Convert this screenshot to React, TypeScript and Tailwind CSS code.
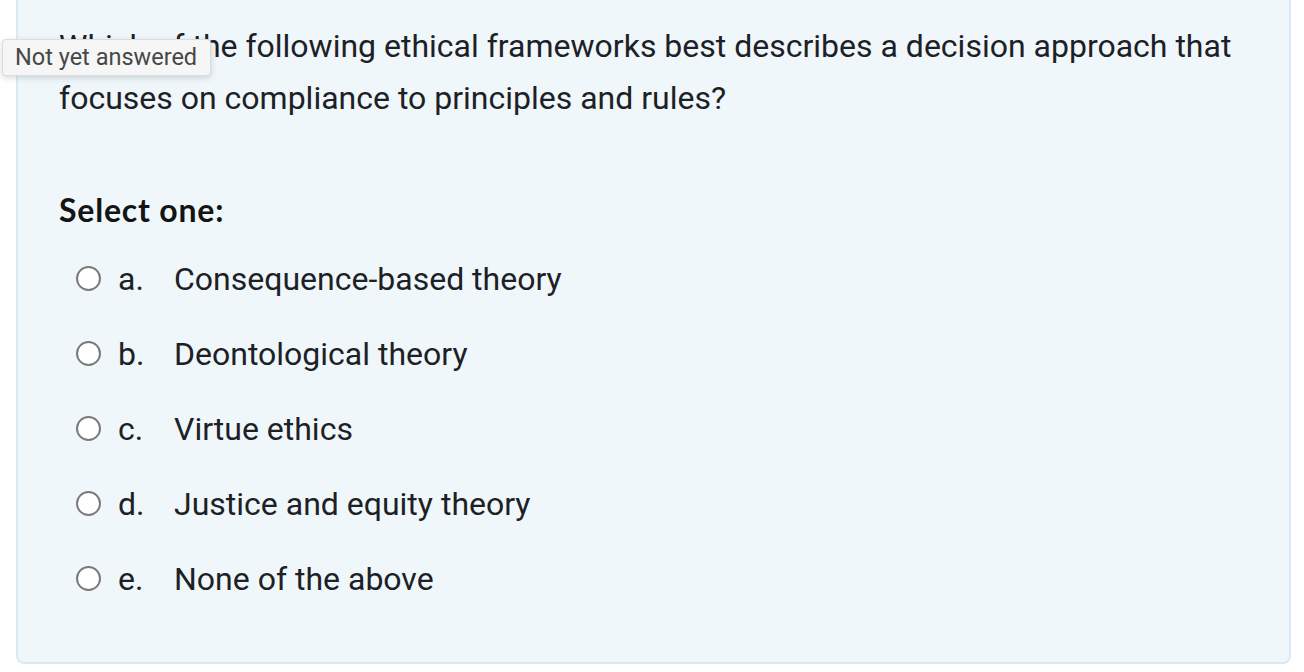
const options = [
  { letter: 'a.', text: 'Consequence-based theory' },
  { letter: 'b.', text: 'Deontological theory' },
  { letter: 'c.', text: 'Virtue ethics' },
  { letter: 'd.', text: 'Justice and equity theory' },
  { letter: 'e.', text: 'None of the above' },
];

export default function App() {
  return (
    <div className="w-[1304px] h-[672px] overflow-hidden bg-white relative font-['Roboto',sans-serif]">
      <div className="ml-4 w-[1275px] h-[684px] -mt-5 bg-[#eff7fb] border-2 border-[#d8eaf4] rounded-lg pl-[41px] pt-[38px]">
        <div className="text-[32px] leading-[52px] text-[#1d2125]">
          Which of the following ethical frameworks best describes a decision approach that
          <br />
          focuses on compliance to principles and rules?
        </div>

        <div className="mt-[69px] text-[32px] font-bold tracking-[0.8px] text-[#141414] font-['Lato',sans-serif] leading-[34px]">
          Select one:
        </div>

        <div className="mt-[14px] flex flex-col">
          {options.map((o) => (
            <label key={o.letter} className="h-[75px] flex items-center text-[32px] text-[#1d2125]">
              <span className="ml-[17px] w-[25px] h-[25px] rounded-full border-2 border-[#7a7a7a] bg-white shrink-0" />
              <span className="ml-[17px] w-[56px]">{o.letter}</span>
              <span>{o.text}</span>
            </label>
          ))}
        </div>
      </div>

      <div className="absolute left-[2px] top-[39px] h-[37px] w-[209px] bg-[#f6f6f6] border border-[#dcdcdc] rounded-sm shadow-[0_2px_6px_rgba(0,0,0,0.15)] flex items-center pl-[12px] text-[23.5px] text-[#474747]">
        Not yet answered
      </div>
    </div>
  );
}
